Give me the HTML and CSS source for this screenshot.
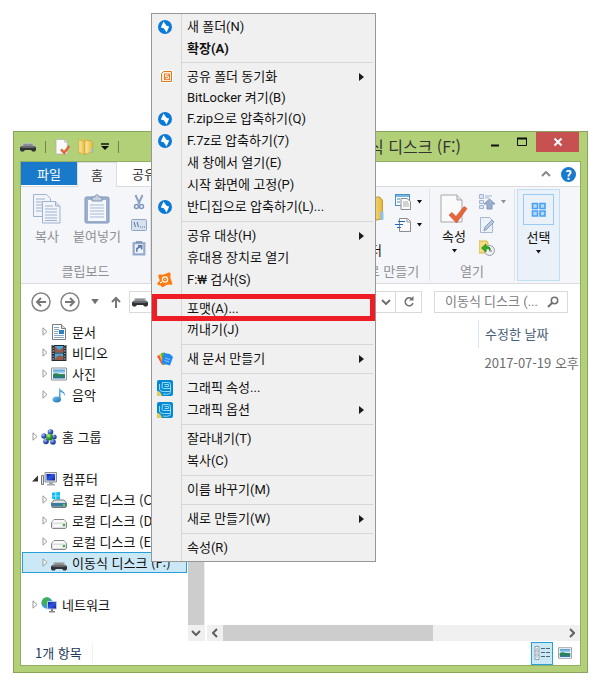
FILE: index.html
```html
<!DOCTYPE html>
<html lang="ko">
<head>
<meta charset="utf-8">
<meta name="viewport" content="width=device-width, initial-scale=1">
<title>이동식 디스크 (F:)</title>
<link rel="stylesheet" href="styles.css">
</head>
<body>
<svg class="sprite" aria-hidden="true">
  <defs>
    <linearGradient id="gold" x1="0" x2="1"><stop offset="0" stop-color="#fbe9a0"/><stop offset="1" stop-color="#e8b93c"/></linearGradient>
    <linearGradient id="steel" x1="0" x2="0" y1="0" y2="1"><stop offset="0" stop-color="#f4f4f4"/><stop offset="1" stop-color="#a9acb0"/></linearGradient>
    <linearGradient id="note" x1="0" x2="1" y1="0" y2="1"><stop offset="0" stop-color="#79c4ec"/><stop offset="1" stop-color="#136fb5"/></linearGradient>
    <linearGradient id="screen" x1="0" x2="1" y1="0" y2="1"><stop offset="0" stop-color="#0718a8"/><stop offset=".5" stop-color="#2f55e0"/><stop offset="1" stop-color="#0a1a90"/></linearGradient>
    <linearGradient id="photo" x1="0" x2="0" y1="0" y2="1"><stop offset="0" stop-color="#3f97d8"/><stop offset=".5" stop-color="#dff3f8"/><stop offset=".55" stop-color="#3c8f5c"/><stop offset="1" stop-color="#1f6fa8"/></linearGradient>
    <radialGradient id="ball" cx=".35" cy=".3"><stop offset="0" stop-color="#a9c0f5"/><stop offset="1" stop-color="#2340a8"/></radialGradient>
    <radialGradient id="greenball" cx=".35" cy=".3"><stop offset="0" stop-color="#b4f08a"/><stop offset="1" stop-color="#1d8a28"/></radialGradient>
  </defs>
  <symbol id="usb" viewBox="0 0 16 10"><path d="M3 1h10l2.500 4H.5z" fill="#b5b8bb"/><path d="M4 2h8l1.500 2.500h-11z" fill="#8b8e92"/><path d="M1 4.500h14l1 1V8l-1 1.500h-2.500L11 8H5L3.500 9.500H1L0 8V5.500z" fill="#303235"/><path d="M1.500 5.500h13" stroke="#65686c"/></symbol>
  <symbol id="disk" viewBox="0 0 16 10"><path d="M3 .5h10l2.500 3v5l-1 1h-13l-1-1v-5z" fill="#dcdee0" stroke="#85898d"/><path d="M3 1h10l2 2.500H1z" fill="#fafafa"/><path d="M2 5h9v3H2z" fill="#f8f8f8"/><rect x="12" y="5" width="2" height="2" fill="#3dba2c"/></symbol>
  <symbol id="sysdisk" viewBox="0 0 16 16"><path d="M1 .8 4.500.3v3.400H1zM5.200.2 9 0v3.700H5.200zM1 4.300h3.500v3L1 6.800zM5.200 4.300H9v3.400l-3.800-.3z" fill="#0dbdf2"/><path d="M3 8h10l2.500 3v3.500l-1 1h-13l-1-1V11z" fill="url(#steel)" stroke="#73777b"/><path d="M1 11h14v3.500H1z" fill="#387d9b"/><path d="M12 12h2v2h-2z" fill="#56d444"/></symbol>
  <symbol id="check-page" viewBox="0 0 28 30"><path d="M1 1h16l5 5v22H1z" fill="#fafafa" stroke="#a5a7aa"/><path d="M17 1v5h5" fill="#e4e4e4" stroke="#a5a7aa"/><path d="m9 21 3-2.500 4 4 8-10 3 2-10.500 14.500z" fill="#e8643a" stroke="#c94c28" stroke-width=".6"/></symbol>
  <symbol id="folder" viewBox="2 3 28 29"><path d="M3 4h16v24H3z" fill="#e9c453"/><path d="m3 4 11 4v24L3 27z" fill="url(#gold)" stroke="#c69a30"/><path d="M14 6h11l3 3v18l-14 3z" fill="url(#gold)" stroke="#c69a30"/><path d="M26 20h3v8h-3z" fill="#87c2ee"/></symbol>
  <symbol id="copy" viewBox="0 0 28 30"><g fill="#f1f5fa" stroke="#9fb2ce"><path d="M.5.5h13l4 4v18H.5z"/><path d="M9.500 7.500h13l4.500 4.500v17H9.500z"/><path d="M22.500 7.500V12H27" fill="#d5dfed"/></g><path d="M3 5h9M3 8h6M3 11h6M3 14h6M3 17h6M12 12h8M12 15h12M12 18h12M12 21h12M12 24h12M12 26.500h12" stroke="#9fb1cc"/></symbol>
  <symbol id="paste" viewBox="0 0 26 30"><rect x="1" y="3" width="24" height="26" rx="1.500" fill="#9cafcd" stroke="#8297b9"/><path d="M4 6h18v21H4z" fill="#f4f7fb"/><path d="M8 7V3h3c0-3 4-3 4 0h3v4z" fill="#c5d0e1" stroke="#7e93b5"/><path d="M6 11h14M6 14h14M6 17h14M6 20h14M6 23h14" stroke="#a9b9d1"/></symbol>
  <symbol id="scissors" viewBox="0 0 16 16"><path d="m4.500 1 4 9M11.500 1l-4 9" stroke="#8da2c4" stroke-width="2" fill="none"/><circle cx="5.500" cy="12.500" r="2" fill="none" stroke="#7f96bc" stroke-width="1.500"/><circle cx="10.500" cy="12.500" r="2" fill="none" stroke="#7f96bc" stroke-width="1.500"/></symbol>
  <symbol id="copy-path" viewBox="0 0 16 12"><rect x=".5" y=".5" width="15" height="11" rx="1" fill="#d7e2f1" stroke="#91a6c6"/><path d="m3 3 1.500 5M6 3l1.500 5M9 8h1M11 8h1M13 8h1" stroke="#5c7299"/></symbol>
  <symbol id="paste-link" viewBox="0 0 14 15"><rect x="1" y="2" width="12" height="12.500" fill="#94a9ca"/><path d="M3 4h8v8.500H3z" fill="#edf3fa"/><path d="M4 3V1h6v2z" fill="#8299bd"/><path d="M5 11V8l4-2m-3-.500h3.500V9" stroke="#607aa3" stroke-width="1.500" fill="none"/></symbol>
  <symbol id="new-item" viewBox="0 0 16 16"><rect x=".5" y=".5" width="14" height="11" fill="#fff" stroke="#4f8fbe"/><path d="M1 2h13" stroke="#74b7df" stroke-width="2"/><path d="M2 5h3M2 8h3" stroke="#398ac0"/><path d="M6 4.500h6l3.500 3v8H6z" fill="#fafafa" stroke="#8a8d90"/><path d="M8 8h5M8 10h6M8 12h6" stroke="#aaa"/></symbol>
  <symbol id="easy-access" viewBox="0 0 16 16"><path d="M4.500 1.500h8l3 3v10h-11z" fill="#fafafa" stroke="#8a8d90"/><path d="M12 2v3h3" fill="none" stroke="#999"/><path d="M3 4.500h7M0 7.500h8M2 10.500h4" stroke="#2167bd"/></symbol>
  <symbol id="open-list" viewBox="0 0 16 16"><path d="M.5.5h4v4h-4zM.5 6.500h4v3h-4zM.5 11.500h4v3h-4z" fill="#dce5f2" stroke="#a3b5d0"/><path d="M6 2h7M6 4h4" stroke="#a3b5d0"/><path d="M8 15v-5H5l5.500-5L16 10h-3v5z" fill="#9bafcd" stroke="#8299bd"/></symbol>
  <symbol id="edit-page" viewBox="0 0 16 16"><path d="M1.500.5h9l3 3v12h-12z" fill="#edf2f9" stroke="#a6b8d3"/><path d="m5 14 1-4 7-7 2 2-7 7z" fill="#bbcae0" stroke="#849bbf"/></symbol>
  <symbol id="history" viewBox="0 0 16 16"><path d="M0 1h8l1 2v10H0z" fill="#f3dc7d" stroke="#d8b84d"/><circle cx="10.500" cy="10.500" r="5" fill="#eceff1" stroke="#989da3"/><path d="M10.500 7v4H13" fill="none" stroke="#777"/><path d="M2.500 8 7 4v2.500c3 0 4 1 4.500 3C10 8.700 9 8.700 7 9v3z" fill="#32ae25" stroke="#188010" stroke-width=".7"/></symbol>
  <symbol id="squares" viewBox="0 0 16 16"><path d="M1.500 1.500h5v5h-5zM9 1.500h5v5H9zM1.500 9h5v5h-5zM9 9h5v5H9z" fill="#b5dbfc" stroke="#4aa0f2" stroke-width="1.600"/></symbol>
  <symbol id="bolt" viewBox="0 0 14 14"><circle cx="7" cy="7" r="7" fill="#0a7ad8"/><path d="M5.500 1.500 8.500 5.800 11.200 6.500 8.600 12.500 5.800 8.300 2.800 7.600z" fill="#fff"/></symbol>
  <symbol id="share-s" viewBox="0 0 13 13"><path d="M0 0h13v13H0z" fill="#fff"/><path d="M1.500 3.500l2-2h8v10h-10z" fill="#fff1df" stroke="#e2761d"/><path d="M4 3.500h6v6.500H4z" fill="#e77a23"/><path d="M8.500 4.800h-3v1.900h3v2h-3" fill="none" stroke="#fff"/></symbol>
  <symbol id="avast" viewBox="0 0 16 16"><path d="M3 2.500C7 3 8 2 11 .8c2-1 3 .2 2.500 2.500-.5 2 0 3.500 1.500 7 .8 2-.3 3-2 2.500-2-.7-3.500 0-6 1.700C5.500 15.500 4 15 4 13.500L1.500 13C-.5 12.500 0 10.800 2 9.500 3.500 8.500 2 7 1.500 5 1 3 1.500 2.300 3 2.500z" fill="#ff7a0e"/><circle cx="8" cy="7.500" r="2.600" fill="none" stroke="#fff" stroke-width="1.200"/><path d="M7.500 7.500h1M3 11l2-1" stroke="#fff" stroke-width="1.200"/></symbol>
  <symbol id="office" viewBox="0 0 16 14"><path d="M0 4l3-1 4 9-2 1z" fill="#f34b43"/><path d="M2 2.500l3-1 3 10.500-2 1z" fill="#f8b931"/><path d="M4 1l4-.5 1 12-3 .5z" fill="#52b43b"/><path d="M7 1l6 1 3 3-3 8.500L4.500 11z" fill="#2388f2"/><path d="M8 6l5 1.500M7.500 8.500l4.500 1.300" stroke="#8ec8ff"/></symbol>
  <symbol id="intel" viewBox="0 0 16 16"><rect width="16" height="16" rx="2" fill="#0789d1"/><path d="M0 11c2.500 0 4.500 2 5 5H2c-1 0-2-1-2-2z" fill="#e5cf55"/><path d="M5.500 2.500h6a2 2 0 0 1 2 2v4H6.500a1.500 1.500 0 0 1-1.500-1.500zM7.500 4.500h4v2h-4M2.500 4v5c0 2 2 2.500 5 2.500h6V8M6 14c3 .5 6 .5 8-1.500" fill="none" stroke="#a5e4fa" stroke-width=".9"/></symbol>
  <symbol id="doc" viewBox="0 0 14 16"><path d="M.5.5h9l4 4v11H.5z" fill="#fff" stroke="#777c80"/><path d="M9.500.5v4h4" fill="#ddd" stroke="#777c80"/><path d="M2 3.500h5M2 5.500h5M2 7.500h4M2 9.500h4M2 11.500h10M2 13.500h10" stroke="#87a5c8"/><path d="M7 6h5v4H7z" fill="#2b7fc5"/></symbol>
  <symbol id="film" viewBox="0 0 14 15"><path d="M0 0h14v15H0z" fill="#232b2e"/><path d="M1.500 0v15M12.500 0v15" stroke="#dce4e5" stroke-dasharray="1 1.500"/><path d="M3 1h8v6H3zM3 8h8v6H3z" fill="#52a7d7"/><path d="M3 1l4 4 4-3v5H3zM3 14c2-5 5-5 8-3v3z" fill="#9b5949"/></symbol>
  <symbol id="picture" viewBox="0 0 16 13"><path d="M.5.5h15v12H.5z" fill="#fff" stroke="#8b9298"/><path d="M2 2h12v9H2z" fill="url(#photo)"/><path d="M2 7c3-3 6 0 12 1v1H2z" fill="#2b8252"/></symbol>
  <symbol id="music" viewBox="0 0 14 16"><path d="M7 0c1 4 7 4 5.500 9-.5-3-2-3.500-4-4v7.500H7z" fill="url(#note)"/><ellipse cx="4.700" cy="12.500" rx="4.200" ry="3" fill="url(#note)"/></symbol>
  <symbol id="homegroup" viewBox="0 0 16 16"><g fill="url(#ball)"><circle cx="3" cy="7" r="2.700"/><circle cx="9.500" cy="3" r="2.800"/><circle cx="13.200" cy="8" r="2.500"/><circle cx="5" cy="12.500" r="2.800"/><circle cx="12" cy="13" r="2.800"/></g><circle cx="8.500" cy="8" r="3.500" fill="url(#greenball)"/></symbol>
  <symbol id="computer" viewBox="0 0 16 14"><path d="M.5 3.500h2v9h-2z" fill="#e5e7e8" stroke="#777b7e"/><path d="M4 .5h11.500v9.500H4z" fill="#dfe1e4" stroke="#898d93"/><path d="M5.500 2h8.500v6.500H5.500z" fill="url(#screen)"/><path d="M8 10h4v2.500H8zM6 12h8v1.500H6z" fill="#a5a9ad"/></symbol>
  <symbol id="network" viewBox="0 0 16 16"><circle cx="6" cy="6" r="5.700" fill="#3c9bdc"/><path d="M2 2c2-2 6-2 7 0L6 5 5 9 1 7zM7 7l4-2v5z" fill="#3bb34b"/><path d="M6.500 4.500h9v7.500h-9z" fill="url(#screen)" stroke="#c2c8d2"/><path d="M10 12h2v2h2v1.500H8V14h2z" fill="#85898f"/></symbol>
  <symbol id="details" viewBox="0 0 16 14"><path d="M1 .5h4v13H1zM1 5h4M1 9h4" fill="#fff" stroke="#8aa0ac"/><path d="M7 2.500h4M12 2.500h4M7 6.500h4M12 6.500h4M7 10.500h4M12 10.500h4" stroke="#4e6672"/><path d="M2.500 2.500h1v1h-1z" fill="#333"/><path d="M2.500 6.500h1v1h-1z" fill="#d22"/><path d="M2.500 10.500h1v1h-1z" fill="#1866b8"/></symbol>
  <symbol id="down" viewBox="0 0 7 4"><path d="M1 0h5L3.500 3.500z" fill="currentColor"/></symbol>
  <symbol id="chevron" viewBox="0 0 10 6"><path d="m1 1 4 4 4-4" fill="none" stroke="currentColor" stroke-width="2"/></symbol>
  <symbol id="closed" viewBox="0 0 6 9"><path d="M1 .8 5 4.500 1 8.200z" fill="#fff" stroke="#999"/></symbol>
  <symbol id="opened" viewBox="0 0 6 6"><path d="M6 0v6H0z" fill="#333"/></symbol>
</svg>

<main class="desktop">
  <section class="window" aria-label="파일 탐색기">
    <header class="titlebar">
      <div class="quick">
        <svg class="i-usb"><use href="#usb"/></svg><span class="tick"></span>
        <button class="plain" aria-label="속성"><svg class="i16"><use href="#check-page"/></svg></button>
        <button class="plain" aria-label="새 폴더"><svg class="i16"><use href="#folder"/></svg></button>
        <button class="plain" aria-label="사용자 지정"><svg class="i-custom" viewBox="0 0 8 7"><path d="M0 1h8" stroke="#111" stroke-width="1.500"/><path d="M0 3h8L4 7z" fill="#111"/></svg></button>
        <span class="tick"></span>
      </div>
      <h1 class="title">이동식 디스크 (F:)</h1>
      <div class="controls">
        <button class="control" aria-label="최소화"><svg class="i-ctl" viewBox="0 0 12 12"><path d="M2 9.500h8" stroke="#111" stroke-width="2"/></svg></button>
        <button class="control" aria-label="최대화"><svg class="i-ctl" viewBox="0 0 12 12"><path d="M1.500 2.500h9v7h-9z" fill="none" stroke="#111"/><path d="M1 2.500h10" stroke="#111" stroke-width="2"/></svg></button>
        <button class="control close" aria-label="닫기"><svg class="i-ctl" viewBox="0 0 12 12"><path d="m2.500 2.500 7 7m0-7-7 7" stroke="#fff" stroke-width="2"/></svg></button>
      </div>
    </header>

    <div class="client">
      <nav class="tabs">
        <button class="tab file">파일</button>
        <button class="tab home">홈</button>
        <button class="tab share">공유</button>
        <div class="tab-tools">
          <button class="plain" aria-label="리본 최소화"><svg class="i-chev up"><use href="#chevron"/></svg></button>
          <button class="help" aria-label="도움말">?</button>
        </div>
      </nav>

      <div class="ribbon">
        <section class="group clipboard">
          <div class="tools">
            <button class="big dim"><svg class="i-big"><use href="#copy"/></svg>복사</button>
            <button class="big dim"><svg class="i-big"><use href="#paste"/></svg>붙여넣기</button>
            <div class="stack">
              <button class="plain" aria-label="잘라내기"><svg class="i16"><use href="#scissors"/></svg></button>
              <button class="plain" aria-label="경로 복사"><svg class="i16"><use href="#copy-path"/></svg></button>
              <button class="plain" aria-label="바로 가기 붙여넣기"><svg class="i16"><use href="#paste-link"/></svg></button>
            </div>
          </div>
          <h2 class="caption">클립보드</h2>
        </section>
        <section class="group create">
          <div class="tools">
            <button class="big"><svg class="i-big"><use href="#folder"/></svg><span>새</span><span>폴더</span></button>
            <div class="stack">
              <button class="plain" aria-label="새 항목"><svg class="i16"><use href="#new-item"/></svg><svg class="i-down"><use href="#down"/></svg></button>
              <button class="plain" aria-label="빠른 연결"><svg class="i16"><use href="#easy-access"/></svg><svg class="i-down"><use href="#down"/></svg></button>
            </div>
          </div>
          <h2 class="caption">새로 만들기</h2>
        </section>
        <section class="group open">
          <div class="tools">
            <button class="big"><svg class="i-big"><use href="#check-page"/></svg>속성<svg class="i-down"><use href="#down"/></svg></button>
            <div class="stack">
              <button class="plain dim" aria-label="열기"><svg class="i16"><use href="#open-list"/></svg><svg class="i-down"><use href="#down"/></svg></button>
              <button class="plain" aria-label="편집"><svg class="i16"><use href="#edit-page"/></svg></button>
              <button class="plain" aria-label="히스토리"><svg class="i16"><use href="#history"/></svg></button>
            </div>
          </div>
          <h2 class="caption">열기</h2>
        </section>
        <button class="select-group"><span class="select-icon"><svg class="i16"><use href="#squares"/></svg></span>선택<svg class="i-down"><use href="#down"/></svg></button>
      </div>

      <div class="navbar">
        <button class="plain" aria-label="뒤로"><svg class="i20" viewBox="0 0 20 20"><circle cx="10" cy="10" r="9" fill="none" stroke="#858585" stroke-width="1.500"/><path d="M15 10H6m4-4-4 4 4 4" fill="none" stroke="#777" stroke-width="2"/></svg></button>
        <button class="plain" aria-label="앞으로"><svg class="i20" viewBox="0 0 20 20"><circle cx="10" cy="10" r="9" fill="none" stroke="#858585" stroke-width="1.500"/><path d="M5 10h9m-4-4 4 4-4 4" fill="none" stroke="#777" stroke-width="2"/></svg></button>
        <button class="plain grey" aria-label="최근 위치"><svg class="i-recent"><use href="#down"/></svg></button>
        <button class="plain" aria-label="위로"><svg class="i-up" viewBox="0 0 12 12"><path d="M6 12V2M2 6l4-4 4 4" fill="none" stroke="#777" stroke-width="2"/></svg></button>
        <div class="address">
          <svg class="i-usb"><use href="#usb"/></svg>
          <button class="address-drop grey" aria-label="이전 위치"><svg class="i-chev"><use href="#chevron"/></svg></button>
          <button class="refresh" aria-label="새로 고침"><svg class="i-ctl" viewBox="0 0 12 12"><path d="M9 3a4 4 0 1 0 1 4" fill="none" stroke="#707070" stroke-width="1.500"/><path d="M10.500 0v4.500H6z" fill="#707070"/></svg></button>
        </div>
        <label class="search"><input type="text" aria-label="검색" placeholder="이동식 디스크 (..."><svg class="i-ctl" viewBox="0 0 12 12"><circle cx="7.500" cy="4.500" r="3.200" fill="none" stroke="#707070" stroke-width="1.500"/><path d="M5 7 1 11" stroke="#707070" stroke-width="2"/></svg></label>
      </div>

      <div class="body">
        <aside class="sidebar">
          <ul class="tree">
            <li><a class="node child" href="#"><svg class="twist"><use href="#closed"/></svg><svg class="i16"><use href="#doc"/></svg>문서</a></li>
            <li><a class="node child" href="#"><svg class="twist"><use href="#closed"/></svg><svg class="i16"><use href="#film"/></svg>비디오</a></li>
            <li><a class="node child" href="#"><svg class="twist"><use href="#closed"/></svg><svg class="i16"><use href="#picture"/></svg>사진</a></li>
            <li><a class="node child" href="#"><svg class="twist"><use href="#closed"/></svg><svg class="i16"><use href="#music"/></svg>음악</a></li>
            <li class="root"><a class="node" href="#"><svg class="twist"><use href="#closed"/></svg><svg class="i16"><use href="#homegroup"/></svg>홈 그룹</a></li>
            <li class="root"><a class="node" href="#"><svg class="twist"><use href="#opened"/></svg><svg class="i16"><use href="#computer"/></svg>컴퓨터</a></li>
            <li><a class="node child" href="#"><svg class="twist"><use href="#closed"/></svg><svg class="i16"><use href="#sysdisk"/></svg>로컬 디스크 (C:)</a></li>
            <li><a class="node child" href="#"><svg class="twist"><use href="#closed"/></svg><svg class="i16 low"><use href="#disk"/></svg>로컬 디스크 (D:)</a></li>
            <li><a class="node child" href="#"><svg class="twist"><use href="#closed"/></svg><svg class="i16 low"><use href="#disk"/></svg>로컬 디스크 (E:)</a></li>
            <li><a class="node child selected" href="#"><svg class="twist"><use href="#closed"/></svg><svg class="i16 low"><use href="#usb"/></svg>이동식 디스크 (F:)</a></li>
            <li class="root"><a class="node" href="#"><svg class="twist"><use href="#closed"/></svg><svg class="i16"><use href="#network"/></svg>네트워크</a></li>
          </ul>
          <div class="vscroll"><span class="vthumb"></span><button class="scroll-btn" aria-label="아래로"><svg class="i-chev"><use href="#chevron"/></svg></button></div>
        </aside>
        <section class="content">
          <table class="files">
            <thead><tr><th scope="col">수정한 날짜</th></tr></thead>
            <tbody><tr><td>2017-07-19 오후</td></tr></tbody>
          </table>
          <div class="hscroll">
            <button class="scroll-btn" aria-label="왼쪽으로"><svg class="i-chev left"><use href="#chevron"/></svg></button>
            <span class="hthumb"></span><span class="htrack"></span>
            <button class="scroll-btn" aria-label="오른쪽으로"><svg class="i-chev right"><use href="#chevron"/></svg></button>
          </div>
        </section>
      </div>

      <footer class="status">
        <span class="count">1개 항목</span>
        <div class="views">
          <button class="view active" aria-label="자세히"><svg class="i16"><use href="#details"/></svg></button>
          <button class="view" aria-label="큰 아이콘"><svg class="i-thumb"><use href="#picture"/></svg></button>
        </div>
      </footer>
    </div>
  </section>

  <div class="menu" role="menu">
    <button class="item" role="menuitem"><svg class="mi round"><use href="#bolt"/></svg>새 폴더(N)</button>
    <button class="item short strong" role="menuitem">확장(A)</button>
    <hr>
    <button class="item short more" role="menuitem"><svg class="mi small"><use href="#share-s"/></svg>공유 폴더 동기화</button>
    <button class="item short" role="menuitem">BitLocker 켜기(B)</button>
    <button class="item" role="menuitem"><svg class="mi round"><use href="#bolt"/></svg>F.zip으로 압축하기(Q)</button>
    <button class="item" role="menuitem"><svg class="mi round"><use href="#bolt"/></svg>F.7z로 압축하기(7)</button>
    <button class="item" role="menuitem">새 창에서 열기(E)</button>
    <button class="item" role="menuitem">시작 화면에 고정(P)</button>
    <button class="item" role="menuitem"><svg class="mi round"><use href="#bolt"/></svg>반디집으로 압축하기(L)...</button>
    <hr>
    <button class="item more" role="menuitem">공유 대상(H)</button>
    <button class="item" role="menuitem">휴대용 장치로 열기</button>
    <button class="item" role="menuitem"><svg class="mi"><use href="#avast"/></svg>F:₩ 검사(S)</button>
    <hr>
    <button class="item short marked" role="menuitem">포맷(A)...</button>
    <button class="item" role="menuitem">꺼내기(J)</button>
    <hr>
    <button class="item more" role="menuitem"><svg class="mi"><use href="#office"/></svg>새 문서 만들기</button>
    <hr>
    <button class="item" role="menuitem"><svg class="mi"><use href="#intel"/></svg>그래픽 속성...</button>
    <button class="item more" role="menuitem"><svg class="mi"><use href="#intel"/></svg>그래픽 옵션</button>
    <hr>
    <button class="item" role="menuitem">잘라내기(T)</button>
    <button class="item" role="menuitem">복사(C)</button>
    <hr>
    <button class="item" role="menuitem">이름 바꾸기(M)</button>
    <hr>
    <button class="item more" role="menuitem">새로 만들기(W)</button>
    <hr>
    <button class="item" role="menuitem">속성(R)</button>
  </div>
</main>
</body>
</html>
```
FILE: styles.css
```css
* { box-sizing: border-box; }
body {
  margin: 0;
  background: #fff;
  color: #111;
  font: 13px/20px "Noto Sans CJK KR", sans-serif;
}
button, input { font: inherit; color: inherit; border: 0; padding: 0; margin: 0; background: none; border-radius: 0; }
button { display: flex; align-items: center; }
h1, h2 { margin: 0; font-weight: 400; }
svg { display: block; flex: none; }
.sprite { position: absolute; width: 0; height: 0; }

.i16 { width: 16px; height: 16px; }
.i20 { width: 20px; height: 20px; }
.i-usb { width: 16px; height: 10px; }
.i-big { width: 32px; height: 30px; }
.i-ctl { width: 12px; height: 12px; }
.i-custom { width: 8px; height: 7px; }
.i-down { width: 7px; height: 4px; }
.i-chev { width: 10px; height: 6px; }
.i-up { width: 12px; height: 14px; }
.i-recent { width: 12px; height: 6px; }
.i-thumb { width: 14px; height: 12px; }
.up { transform: rotate(180deg); }
.left { transform: rotate(90deg); }
.right { transform: rotate(-90deg); }
.grey { color: #707070; }

.desktop { position: relative; display: flex; min-height: 100vh; padding: 131px 3px 7px 13px; }
.window {
  flex: 1;
  min-width: 0;
  display: flex;
  flex-direction: column;
  padding: 0 6px 6px;
  background: #b2d077;
  border: 1px solid #89a25d;
}

.titlebar { display: flex; height: 29px; }
.quick { display: flex; align-items: center; gap: 7px; }
.tick { width: 1px; height: 12px; margin: 0 2px; background: #6f8449; }
.title { flex: 1; padding: 2px 20px 0 0; text-align: right; font-size: 16px; line-height: 24px; color: #333; white-space: nowrap; }
.controls { display: flex; align-items: flex-start; padding-right: 2px; }
.control { width: 27px; height: 20px; justify-content: center; }
.control.close { width: 43px; margin-left: 1px; background: #c75050; }

.client { flex: 1; display: flex; flex-direction: column; background: #fff; border: 1px solid #93ad62; min-width: 0; }

.tabs { display: flex; height: 25px; border-bottom: 1px solid #d9dbde; }
.tab { justify-content: center; height: 23px; color: #333; }
.file { width: 56px; background: #1979ca; color: #fff; }
.home { width: 40px; height: 25px; background: #f4f6f9; border: 1px solid #d9dbde; border-bottom: 0; }
.share { width: 54px; }
.tab-tools { display: flex; align-items: center; gap: 10px; margin-left: auto; padding-right: 4px; color: #888; }
.help { width: 15px; height: 15px; justify-content: center; border-radius: 50%; background: #1979ca; color: #fff; font-weight: 700; line-height: 15px; }

.ribbon { display: flex; height: 97px; padding: 2px 20px 2px 0; background: #f4f6f9; border-bottom: 1px solid #d9dbde; }
.group { display: flex; flex-direction: column; border-right: 1px solid #dfe2e6; }
.tools { flex: 1; display: flex; padding-top: 5px; }
.big { display: flex; flex-direction: column; align-items: center; line-height: 14px; white-space: nowrap; }
.big .i-big { margin-bottom: 5px; }
.big .i-down, .select-group .i-down { margin-top: 6px; }
.dim { color: #8d8f93; }
.stack { display: flex; flex-direction: column; gap: 7px; }
.stack .plain { gap: 5px; }
.caption { font-size: 13px; line-height: 20px; text-align: center; color: #8d8f93; }
.clipboard { width: 130px; }
.clipboard .tools { gap: 10px; padding-left: 10px; }
.clipboard .big { min-width: 32px; }
.clipboard .big + .big { min-width: 48px; }
.create { margin-left: auto; width: 84px; }
.create .tools { gap: 9px; padding-left: 8px; }
.create .big { align-self: flex-start; line-height: 16px; }
.create .big .i-big { margin-bottom: 2px; }
.open { width: 85px; }
.open .tools { gap: 9px; padding-left: 8px; }
.select-group { width: 43px; margin-left: 2px; padding-top: 4px; flex-direction: column; line-height: 14px; border: 1px solid #c2def5; background: #eaf1f9; }
.select-icon { display: flex; align-items: center; justify-content: center; width: 31px; height: 31px; margin-bottom: 5px; border: 1px solid #98cbf5; }

.navbar { display: flex; align-items: center; height: 36px; padding: 0 12px 0 10px; }
.navbar > .plain + .plain { margin-left: 9px; }
.address { flex: 1; display: flex; align-items: center; height: 22px; margin-left: 7px; padding-left: 2px; border: 1px solid #dadada; }
.address-drop { margin-left: auto; width: 18px; height: 20px; justify-content: center; }
.refresh { width: 26px; height: 20px; justify-content: center; border-left: 1px solid #dadada; }
.search { display: flex; align-items: center; width: 134px; height: 22px; margin-left: 12px; padding: 0 8px 0 10px; border: 1px solid #dadada; }
.search input { flex: 1; min-width: 0; height: 20px; outline: 0; font-family: Roboto, "Noto Sans CJK KR", sans-serif; }
.search input::placeholder { color: #808080; opacity: 1; }

.body { flex: 1; display: flex; min-height: 0; }
.sidebar { flex: none; display: flex; width: 184px; border-right: 1px solid #eee; }
.tree { flex: 1; min-width: 0; margin: 0; padding: 1px 0 0 1px; list-style: none; }
.root { margin-top: 21px; }
.node { display: flex; align-items: center; gap: 5px; height: 21px; padding-left: 9px; border: 1px solid transparent; color: #111; text-decoration: none; white-space: nowrap; }
.node.child { padding-left: 19px; }
.node.selected { background: #cbe8f6; border-color: #26a0da; }
.twist { width: 6px; height: 9px; margin-right: -2px; }
.node .low { height: 10px; margin-top: 6px; }
.vscroll { display: flex; flex-direction: column; width: 16px; margin-left: 1px; }
.vthumb { flex: 1; background: #cdcdcd; }
.scroll-btn { width: 16px; height: 16px; justify-content: center; background: #f0f0f0; color: #606060; }

.content { flex: 1; display: flex; flex-direction: column; justify-content: space-between; min-width: 0; margin-left: 2px; overflow: hidden; }
.files { align-self: flex-end; width: 102px; table-layout: fixed; border-collapse: collapse; white-space: nowrap; }
.files th, .files td { padding: 0 0 0 6px; text-align: left; font-weight: 400; }
.files th { height: 28px; color: #4c607a; border-left: 1px solid #d5e6f5; }
.files td { height: 30px; color: #6d6d6d; overflow: hidden; }
.hscroll { display: flex; background: #f0f0f0; }
.hthumb { flex: 210; background: #cdcdcd; }
.htrack { flex: 131; }

.status { display: flex; justify-content: space-between; align-items: center; height: 24px; padding: 0 4px 0 14px; color: #1e395b; }
.count { padding-right: 10px; border-right: 1px solid #f0f0f0; }
.views { display: flex; gap: 1px; }
.view { width: 22px; height: 23px; justify-content: center; border: 1px solid transparent; }
.view.active { background: #cbe8f6; border-color: #26a0da; }

.menu {
  position: absolute;
  left: 151px;
  top: 13px;
  width: 225px;
  padding: 2px 0;
  font-family: Roboto, "Noto Sans CJK KR", sans-serif;
  background: linear-gradient(#d7d7d7, #d7d7d7) 29px 0 / 1px 100% no-repeat #f0f0f0;
  border: 1px solid #979797;
}
.item { position: relative; width: 100%; height: 22px; padding-left: 35px; white-space: nowrap; }
.item.short { height: 21px; }
.strong { font-weight: 700; }
.mi { position: absolute; left: 5px; top: 3px; width: 16px; height: 16px; }
.mi.round { left: 6px; top: 4px; width: 14px; height: 14px; }
.mi.small { left: 8px; top: 4px; width: 13px; height: 13px; }
.more::before { content: ""; position: absolute; right: 11px; top: 7px; border: 4px solid transparent; border-left: 5px solid #1a1a1a; border-right: 0; }
.marked::after { content: ""; position: absolute; inset: -4px 0 -2px; border: 5px solid #ee1c24; }
.menu hr { height: 1px; margin: 3px 2px 3px 29px; border: 0; background: #d7d7d7; }
```
